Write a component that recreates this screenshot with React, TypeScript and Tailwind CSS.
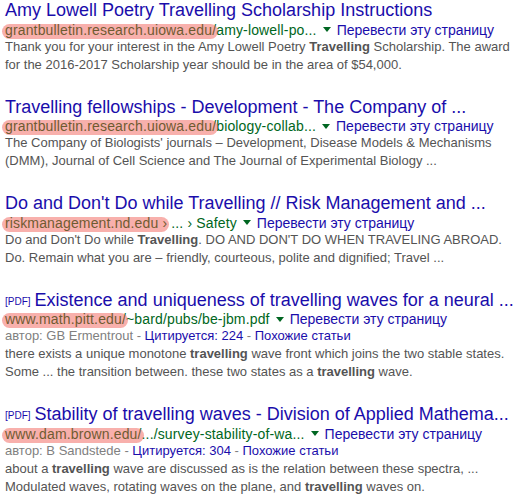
import React from "react";

const Hl = ({ children }: { children: React.ReactNode }) => (
  <span className="relative">
    {children}
    <span className="absolute -left-[3px] -right-[2px] top-[2px] bottom-[-1px] rounded-full bg-[rgba(240,80,70,0.45)] pointer-events-none" />
  </span>
);

const Arrow = () => (
  <span className="inline-block align-middle mx-[6px] w-0 h-0 border-x-[4px] border-x-transparent border-t-[5px] border-t-[#006621] relative -top-[1px]" />
);

const Translate = () => (
  <>
    <Arrow />
    <span className="text-[#1a0dab]">Перевести эту страницу</span>
  </>
);

const Pdf = () => (
  <span className="text-[10px] text-[#1a0dab] align-top relative top-[1px] mr-[4px]">[PDF]</span>
);

type R = {
  title: React.ReactNode;
  url: React.ReactNode;
  author?: React.ReactNode;
  snippet: React.ReactNode;
};

const results: R[] = [
  {
    title: "Amy Lowell Poetry Travelling Scholarship Instructions",
    url: (
      <>
        <Hl>grantbulletin.research.uiowa.edu/</Hl>amy-lowell-po...
      </>
    ),
    snippet: (
      <>
        Thank you for your interest in the Amy Lowell Poetry <b>Travelling</b> Scholarship. The award for the 2016-2017 Scholarship year should be in the area of $54,000.
      </>
    ),
  },
  {
    title: "Travelling fellowships - Development - The Company of ...",
    url: (
      <>
        <Hl>grantbulletin.research.uiowa.edu/</Hl>biology-collab...
      </>
    ),
    snippet: (
      <>
        The Company of Biologists' journals – Development, Disease Models &amp; Mechanisms (DMM), Journal of Cell Science and The Journal of Experimental Biology ...
      </>
    ),
  },
  {
    title: "Do and Don't Do while Travelling // Risk Management and ...",
    url: (
      <>
        <Hl>riskmanagement.nd.edu ›</Hl> ... › Safety
      </>
    ),
    snippet: (
      <>
        Do and Don't Do while <b>Travelling</b>. DO AND DON'T DO WHEN TRAVELING ABROAD. Do. Remain what you are – friendly, courteous, polite and dignified; Travel ...
      </>
    ),
  },
  {
    title: (
      <>
        <Pdf />
        Existence and uniqueness of travelling waves for a neural ...
      </>
    ),
    url: (
      <>
        <Hl>www.math.pitt.edu/</Hl>~bard/pubs/be-jbm.pdf
      </>
    ),
    author: (
      <>
        автор: GB Ermentrout - <span className="text-[#1a0dab]">Цитируется: 224</span> - <span className="text-[#1a0dab]">Похожие статьи</span>
      </>
    ),
    snippet: (
      <>
        there exists a unique monotone <b>travelling</b> wave front which joins the two stable states. Some ... the transition between. these two states as a <b>travelling</b> wave.
      </>
    ),
  },
  {
    title: (
      <>
        <Pdf />
        Stability of travelling waves - Division of Applied Mathema...
      </>
    ),
    url: (
      <>
        <Hl>www.dam.brown.edu/</Hl>.../survey-stability-of-wa...
      </>
    ),
    author: (
      <>
        автор: B Sandstede - <span className="text-[#1a0dab]">Цитируется: 304</span> - <span className="text-[#1a0dab]">Похожие статьи</span>
      </>
    ),
    snippet: (
      <>
        about a <b>travelling</b> wave are discussed as is the relation between these spectra, ... Modulated waves, rotating waves on the plane, and <b>travelling</b> waves on.
      </>
    ),
  },
];

export default function App() {
  return (
    <div
      className="w-[522px] h-[503px] bg-white overflow-hidden pl-[5px] pr-[4px] flex flex-col gap-[22.5px]"
      style={{ fontFamily: '"Liberation Sans", Arial, sans-serif' }}
    >
      {results.map((r, i) => (
        <div key={i} className="flex flex-col">
          <div className="text-[18px] leading-[21.6px] text-[#1a0dab] whitespace-nowrap">{r.title}</div>
          <div className="text-[14px] leading-[16px] text-[#006621] whitespace-nowrap">
            <span className="tracking-[0.15px]">{r.url}</span>
            <Translate />
          </div>
          {r.author && (
            <div className="text-[13px] leading-[18px] text-[#808080] whitespace-nowrap">{r.author}</div>
          )}
          <div className="text-[13px] leading-[18.2px] text-[#545454]">{r.snippet}</div>
        </div>
      ))}
    </div>
  );
}
